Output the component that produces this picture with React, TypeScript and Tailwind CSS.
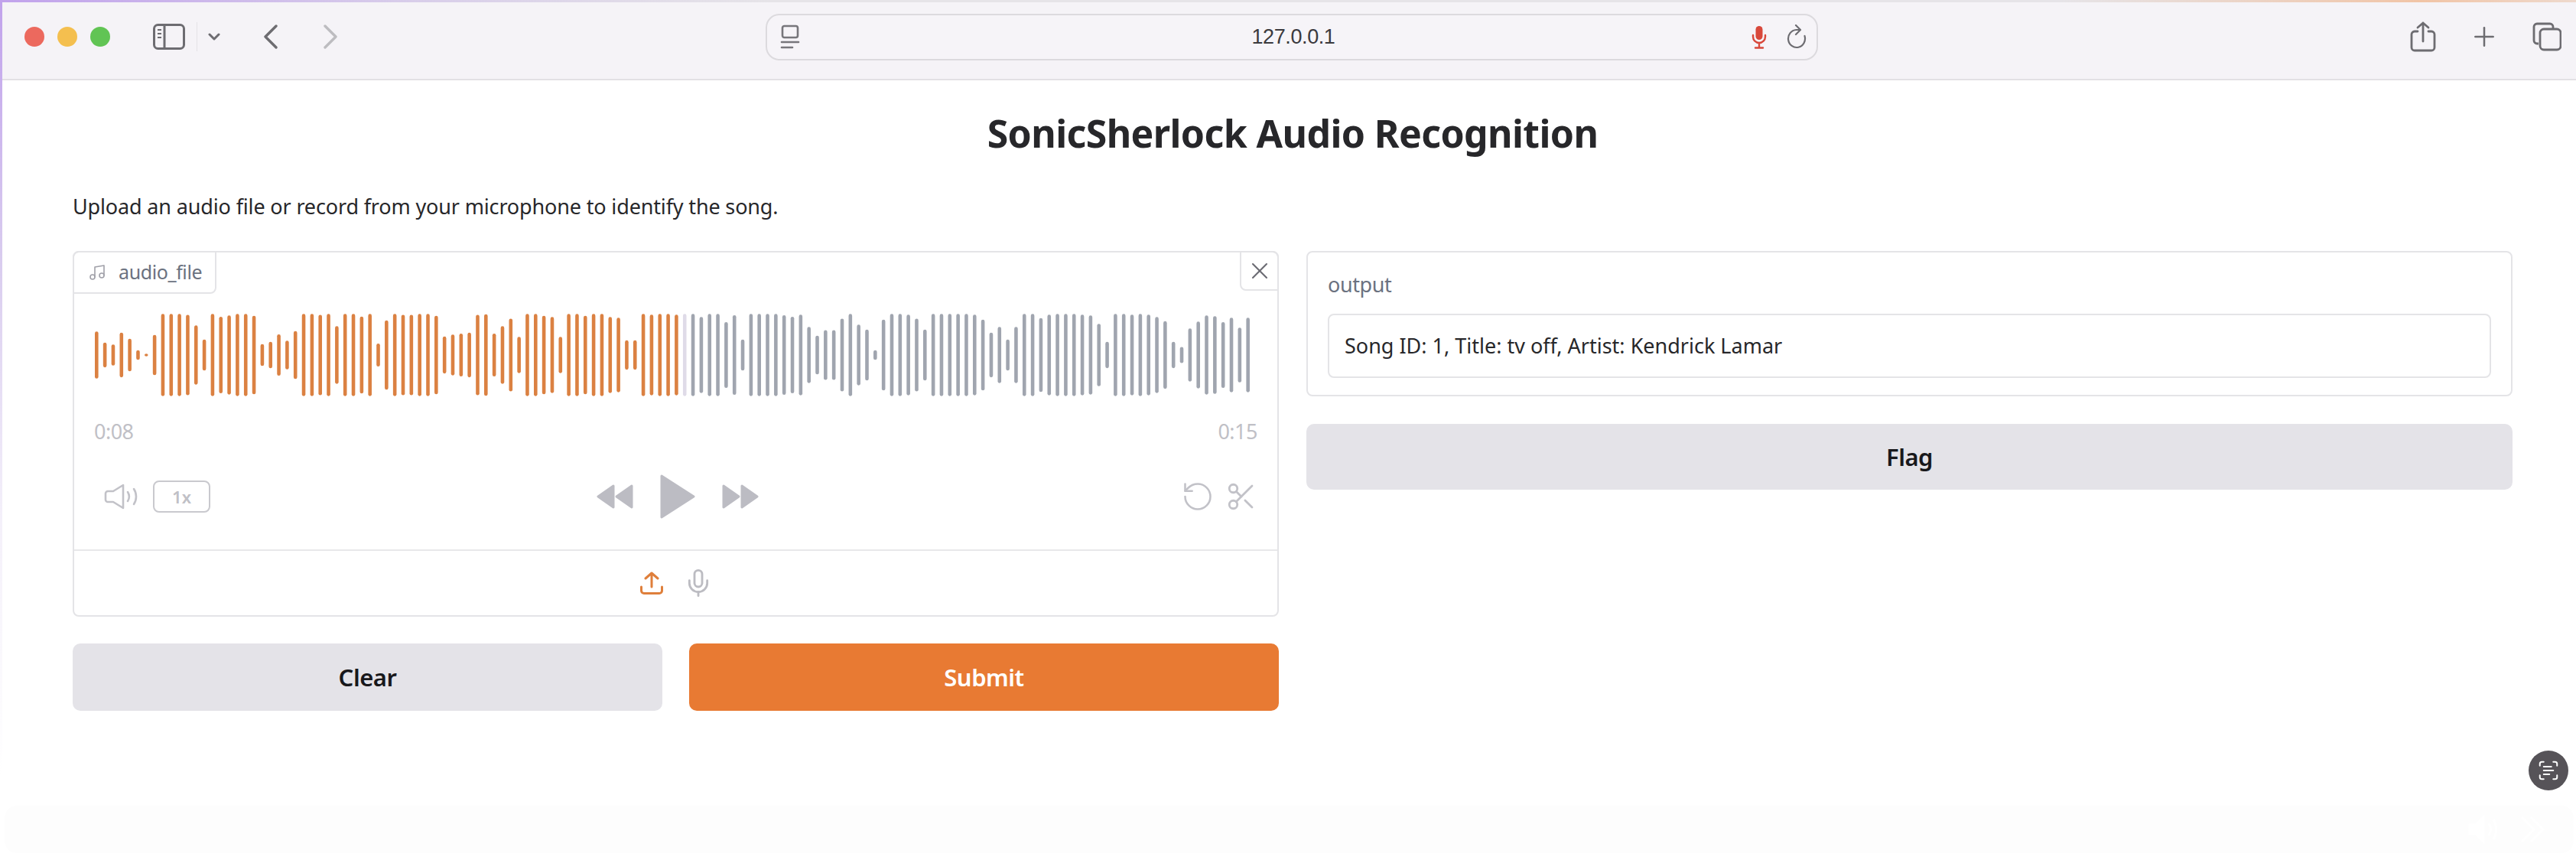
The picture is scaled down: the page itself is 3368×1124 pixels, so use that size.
import { Mic, Music, RotateCcw, Scissors, ScanText, Plus, X } from 'lucide-react';

const font = { fontFamily: '"Noto Sans", sans-serif' };

// bar heights read off the reference, 3x units
const bars = [
  185, 97, 83, 175, 128, 38, 10, 158, 322, 322, 322, 315, 232, 122, 322, 300, 310, 322, 322, 308, 86, 104, 162, 113, 188,
  322, 322, 315, 322, 226, 322, 322, 302, 322, 90, 272, 322, 315, 315, 322, 322, 308, 145, 160, 168, 175, 315, 320, 168,
  226, 285, 142, 322, 322, 308, 298, 142, 322, 322, 308, 322, 322, 298, 292, 115, 115, 322, 316, 322, 322, 316, 322, 322,
  298, 322, 322, 258, 312, 122, 322, 322, 322, 322, 312, 300, 316, 220, 152, 195, 195, 285, 322, 238, 200, 38, 278, 322,
  322, 316, 285, 200, 322, 322, 322, 322, 322, 316, 278, 175, 220, 122, 220, 322, 322, 290, 316, 322, 322, 322, 316, 310,
  245, 103, 322, 322, 316, 322, 316, 298, 265, 103, 63, 208, 262, 310, 305, 258, 292, 215, 292,
];

function Waveform() {
  return (
    <svg width="1520" height="108" viewBox="0 0 1520 108" className="block">
      {bars.map((h, i) => {
        const height = h / 3;
        const fill = i < 71 ? '#db8142' : i === 71 ? '#dfdbe8' : '#a0a5af';
        return <rect key={i} x={i * 10.83} y={54 - height / 2} width="4.6" height={height} rx="2.3" fill={fill} />;
      })}
    </svg>
  );
}

function SidebarIcon() {
  return (
    <svg width="42" height="34" viewBox="0 0 42 34" fill="none" stroke="#6d6c71" strokeWidth="3">
      <rect x="1.5" y="1.5" width="39" height="31" rx="5" />
      <path d="M15 2v30" />
      <path d="M6 8h5M6 13h5M6 18h5" strokeWidth="2" />
    </svg>
  );
}

function Chevron({ dir, color }: { dir: 'left' | 'right'; color: string }) {
  return (
    <svg width="18" height="32" viewBox="0 0 18 32" fill="none" stroke={color} strokeWidth="3.4" strokeLinecap="round" strokeLinejoin="round">
      <path d={dir === 'left' ? 'M16 2 2 16l14 14' : 'M2 2l14 14L2 30'} />
    </svg>
  );
}

function PageIcon() {
  return (
    <svg width="26" height="32" viewBox="0 0 26 32" fill="none" stroke="#77767b" strokeWidth="2.6" strokeLinecap="round">
      <rect x="3" y="2" width="20" height="15" rx="2.5" />
      <path d="M2 23h22" />
      <path d="M2 30h14" />
    </svg>
  );
}

function RedMic() {
  return (
    <svg width="20" height="31" viewBox="0 0 20 31" fill="none" stroke="#d8483b" strokeWidth="2.4" strokeLinecap="round">
      <rect x="5.5" y="1" width="9" height="18" rx="4.5" fill="#d8483b" stroke="none" />
      <path d="M2 13v2a8 8 0 0 0 16 0v-2M10 23v6M5 29.5h10" />
    </svg>
  );
}

function ReloadIcon() {
  return (
    <svg width="26" height="32" viewBox="0 0 26 32" fill="none" stroke="#6d6c71" strokeWidth="2.2" strokeLinecap="round" strokeLinejoin="round">
      <path d="M23.5 15a11 11.5 0 1 1-11-8H17" />
      <path d="M12 1l6 6-6 6" />
    </svg>
  );
}

function ShareIcon() {
  return (
    <svg width="34" height="40" viewBox="0 0 34 40" fill="none" stroke="#6d6c71" strokeWidth="2.8" strokeLinecap="round" strokeLinejoin="round">
      <path d="M10 13H6a4 4 0 0 0-4 4v17a4 4 0 0 0 4 4h22a4 4 0 0 0 4-4V17a4 4 0 0 0-4-4h-4" />
      <path d="M17 26V2M10 8l7-6 7 6" />
    </svg>
  );
}

function TabsIcon() {
  return (
    <svg width="38" height="38" viewBox="0 0 38 38" fill="none" stroke="#6d6c71" strokeWidth="2.8" strokeLinejoin="round">
      <path d="M8 28H6a4 4 0 0 1-4-4V6a4 4 0 0 1 4-4h17a4 4 0 0 1 4 4v3" />
      <rect x="10" y="9" width="27" height="27" rx="5" />
    </svg>
  );
}

function VolumeIcon() {
  return (
    <svg width="44" height="34" viewBox="0 0 44 34" fill="none" stroke="#c2c2c8" strokeWidth="2.6" strokeLinecap="round" strokeLinejoin="round">
      <path d="M2 13a3 3 0 0 1 3-3h7L25 2v30l-13-8H5a3 3 0 0 1-3-3z" />
      <path d="M31 11c2.5 4 2.5 8 0 12M39 7c4 6 4 14 0 20" />
    </svg>
  );
}

function Skip({ back }: { back?: boolean }) {
  return (
    <svg width="48" height="34" viewBox="0 0 48 34" fill="#bcbcc3" stroke="#bcbcc3" strokeWidth="3" strokeLinejoin="round" className={back ? '-scale-x-100' : ''}>
      <path d="M2 3l20 14L2 31z" />
      <path d="M26 3l20 14-20 14z" />
    </svg>
  );
}

function PlayIcon() {
  return (
    <svg width="46" height="58" viewBox="0 0 46 58" fill="#bcbcc3" stroke="#bcbcc3" strokeWidth="3" strokeLinejoin="round">
      <path d="M2 2l42 27L2 56z" />
    </svg>
  );
}

function UploadIcon() {
  return (
    <svg width="30" height="30" viewBox="0 0 30 30" fill="none" stroke="#df7f3b" strokeWidth="3" strokeLinecap="round" strokeLinejoin="round">
      <path d="M15 20V2M7 9l8-7 8 7" />
      <path d="M1.5 20v5a3.5 3.5 0 0 0 3.5 3.5h20a3.5 3.5 0 0 0 3.5-3.5v-5" />
    </svg>
  );
}

function GhostControls() {
  return (
    <svg width="110" height="40" viewBox="0 0 110 40" fill="none" stroke="#ffffff" strokeWidth="3">
      <path d="M2 14h8l10-10v32L10 26H2z" fill="#ffffff" />
      <path d="M27 12c3 5 3 11 0 16M33 7c5 8 5 18 0 26M70 4l16 16-16 16M82 4l16 16-16 16" />
    </svg>
  );
}

export default function App() {
  return (
    <div className="relative w-[3368px] h-[1124px] bg-white overflow-hidden" style={font}>
      {/* browser chrome */}
      <div className="h-[3px] bg-[linear-gradient(90deg,#c1a2ec_0%,#d8cdea_16%,#e6e4e8_30%,#e6e4e8_80%,#f1c4a6_94%,#eed9cd_100%)]" />
      <div className="relative h-[102px] bg-[#f5f3f7] border-b-2 border-[#e2e0e4] flex items-center pl-[32px] pr-[19px] pb-[10px]">
        <div className="flex items-center gap-[17px]">
          <span className="w-[26px] h-[26px] rounded-full bg-[#ec695e]" />
          <span className="w-[26px] h-[26px] rounded-full bg-[#f4bf4f]" />
          <span className="w-[26px] h-[26px] rounded-full bg-[#61c454]" />
        </div>
        <div className="ml-[56px]"><SidebarIcon /></div>
        <div className="ml-[15px] w-px h-[38px] bg-[#e4e2e6]" />
        <svg width="16" height="10" viewBox="0 0 16 10" fill="none" stroke="#6d6c71" strokeWidth="3" strokeLinecap="round" strokeLinejoin="round" className="ml-[14px]">
          <path d="M2 2l6 6 6-6" />
        </svg>
        <div className="ml-[57px]"><Chevron dir="left" color="#6d6c71" /></div>
        <div className="ml-[60px]"><Chevron dir="right" color="#bdbcc0" /></div>

        <div className="ml-[560px] w-[1376px] h-[61px] rounded-[18px] border-2 border-[#dcdade] bg-[#f6f4f8] grid grid-cols-[1fr_auto_1fr] items-center pl-[17px] pr-[13px]">
          <PageIcon />
          <div className="text-[27px] text-[#3b3a3e] tracking-[-0.4px]" style={{ fontFamily: '"Liberation Sans", sans-serif' }}>127.0.0.1</div>
          <div className="flex items-center justify-end">
            <RedMic />
            <div className="ml-[26px]"><ReloadIcon /></div>
          </div>
        </div>

        <div className="ml-auto flex items-center">
          <ShareIcon />
          <Plus size={40} strokeWidth={1.5} color="#6d6c71" className="ml-[43px]" />
          <div className="ml-[43px]"><TabsIcon /></div>
        </div>
      </div>

      {/* page */}
      <div className="pl-[95px] w-[3285px]">
        <h1 className="mt-[38px] h-[62px] flex items-center justify-center text-[50px] leading-none font-bold text-[#27272a] tracking-[-0.6px]">
          SonicSherlock Audio Recognition
        </h1>
        <p className="mt-[46px] h-[36px] flex items-center text-[27px] leading-none text-[#27272a] tracking-[-0.15px]">
          Upload an audio file or record from your microphone to identify the song.
        </p>

        <div className="mt-[41px] grid grid-cols-2 gap-[36px]">
          <div>
            <div className="relative h-[478px] border-2 border-[#e4e4e7] rounded-[8px] flex flex-col">
              <div className="absolute -left-[2px] -top-[2px] h-[56px] w-[188px] border-2 border-[#e4e4e7] rounded-tl-[8px] rounded-br-[8px] flex items-center pl-[18px] gap-[16px] text-[25px] text-[#6b7280]">
                <Music size={24} strokeWidth={1.6} color="#a0a0a8" />
                <span className="tracking-[-0.4px]">audio_file</span>
              </div>
              <div className="absolute -right-[2px] -top-[2px] w-[51px] h-[52px] border-2 border-[#e4e4e7] rounded-tr-[8px] rounded-bl-[8px] flex items-center justify-center">
                <X size={36} strokeWidth={1.4} color="#6b6b73" />
              </div>

              <div className="h-[390px] pt-[80px] border-b-2 border-[#e8e8ea] shrink-0">
                <div className="pl-[27px]"><Waveform /></div>
                <div className="mt-[31px] pl-[26px] pr-[26px] flex justify-between h-[30px] items-center text-[27px] text-[#c0c0c6] tracking-[-0.5px]">
                  <span>0:08</span>
                  <span>0:15</span>
                </div>
                <div className="mt-[40px] h-[60px] pl-[39px] pr-[26px] grid grid-cols-3 items-center">
                  <div className="flex items-center gap-[20px]">
                    <VolumeIcon />
                    <div className="w-[75px] h-[42px] border-2 border-[#c9c9ce] rounded-[8px] flex items-center justify-center text-[22px] font-semibold text-[#c0c0c6]">1x</div>
                  </div>
                  <div className="flex items-center justify-center gap-[35px] -ml-[8px]">
                    <Skip back />
                    <PlayIcon />
                    <Skip />
                  </div>
                  <div className="flex items-center justify-end gap-[14px]">
                    <RotateCcw size={44} strokeWidth={1.4} color="#c2c2c8" />
                    <Scissors size={42} strokeWidth={1.6} color="#c2c2c8" />
                  </div>
                </div>
              </div>

              <div className="flex-1 flex items-center justify-center gap-[26px] pl-[2px]">
                <UploadIcon />
                <Mic size={40} strokeWidth={1.7} color="#bcbcc2" />
              </div>
            </div>

            <div className="mt-[35px] grid grid-cols-2 gap-[35px]">
              <button className="h-[88px] rounded-[10px] bg-[#e4e3e8] text-[#18181b] text-[31px] font-semibold tracking-[-0.5px]">Clear</button>
              <button className="h-[88px] rounded-[10px] bg-[#e87a33] text-white text-[31px] font-semibold tracking-[-0.5px]">Submit</button>
            </div>
          </div>

          <div>
            <div className="h-[190px] border-2 border-[#e4e4e7] rounded-[8px] px-[26px] pt-[24px]">
              <div className="h-[36px] flex items-center text-[27px] text-[#6b7280] tracking-[-0.4px]">output</div>
              <div className="mt-[20px] h-[84px] border-2 border-[#e4e4e7] rounded-[8px] flex items-center pl-[20px] text-[27px] text-[#27272a]">
                Song ID: 1, Title: tv off, Artist: Kendrick Lamar
              </div>
            </div>
            <button className="mt-[36px] w-full h-[86px] rounded-[10px] bg-[#e4e3e8] text-[#18181b] text-[31px] font-semibold tracking-[-0.5px]">Flag</button>
          </div>
        </div>
      </div>

      {/* overlays from the screen recording */}
      <div className="absolute left-0 top-0 w-[3px] h-full bg-[linear-gradient(180deg,#c1a2ec_0%,#d9ccef_30%,#f4f0fa_60%,#ffffff_90%)]" />
      <div className="absolute left-[6px] right-[3px] top-[1053px] h-[62px] rounded-[16px] bg-[#fdfdfd] flex items-center justify-end pr-[28px]">
        <GhostControls />
      </div>
      <div className="absolute left-[3306px] top-[981px] w-[52px] h-[52px] rounded-full bg-[#565358] flex items-center justify-center">
        <ScanText size={30} strokeWidth={1.6} color="#ffffff" />
      </div>
    </div>
  );
}
